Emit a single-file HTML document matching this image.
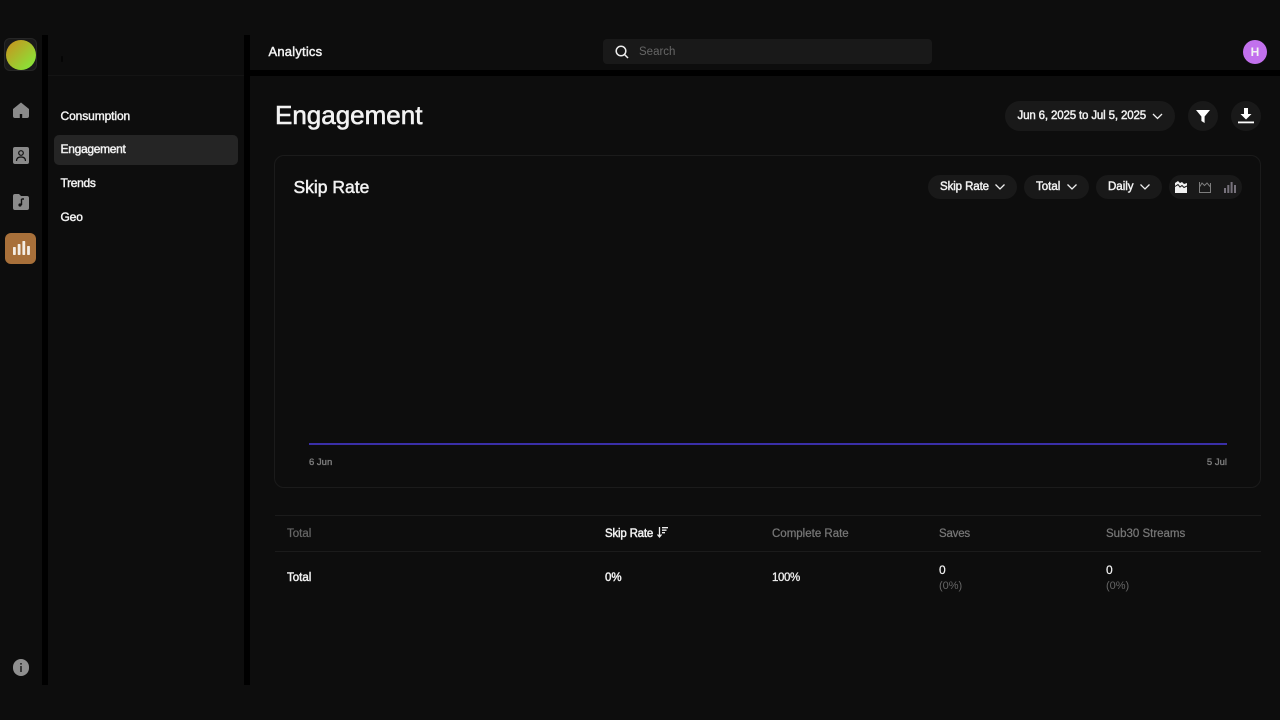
<!DOCTYPE html>
<html lang="en"><head><meta charset="utf-8"><title>Engagement</title>
<style>
*{box-sizing:border-box}
html,body{margin:0;padding:0;background:#0d0d0d}
body{width:1280px;height:720px;position:relative;overflow:hidden;font-family:"Liberation Sans",sans-serif;color:#f2f2f2}
.a{position:absolute}
.t{position:absolute;white-space:nowrap;line-height:16px;font-size:12px;-webkit-text-stroke:.45px currentColor}
.pill{position:absolute;background:#191919;border-radius:16px}
svg{position:absolute;overflow:visible}
.g{color:#7d7d7d;-webkit-text-stroke:.25px currentColor}
</style></head><body>
<div class="a" style="left:42px;top:35px;width:6px;height:650px;background:#000"></div>
<div class="a" style="left:244px;top:35px;width:6px;height:650px;background:#000"></div>
<div class="a" style="left:250px;top:70px;width:1030px;height:6px;background:#000"></div>
<div class="a" style="left:48px;top:75px;width:196px;height:1px;background:#141414"></div>

<div class="a" style="left:4px;top:38px;width:33px;height:33px;border-radius:6px;background:#1a1a1a;border:1px solid #262626"></div>
<div class="a" style="left:6px;top:40px;width:30px;height:30px;border-radius:50%;background:linear-gradient(135deg,#cc8f1c,#7ff03c)"></div>
<div class="a" style="left:61px;top:56px;width:2px;height:6px;border-radius:1px;background:#050505"></div>

<!-- rail icons -->
<svg style="left:12px;top:102px" width="18" height="16" viewBox="0 0 18 16"><path d="M9 .5 17 7v7q0 2-2 2h-4.800v-4h-2.400v4H3q-2 0-2-2V7z" fill="#8a8a8a"/></svg>
<svg style="left:13px;top:147px" width="16" height="17" viewBox="0 0 16 17"><rect width="16" height="17" rx="2" fill="#8a8a8a"/><circle cx="8" cy="6" r="2.300" fill="none" stroke="#111" stroke-width="1.200"/><path d="M3.500 14q0-4 4.500-4t4.500 4" fill="none" stroke="#111" stroke-width="1.200"/></svg>
<svg style="left:13px;top:193px" width="16" height="17" viewBox="0 0 16 17"><path d="M2 1h4l2 2h6q2 0 2 2v10q0 2-2 2H2q-2 0-2-2V3q0-2 2-2z" fill="#8a8a8a"/><path d="M8.500 6v6" stroke="#111" stroke-width="1.400"/><path d="M8.500 6h2.500" stroke="#111" stroke-width="1.500"/><circle cx="7" cy="12" r="1.600" fill="#111"/></svg>
<div class="a" style="left:5px;top:233px;width:31px;height:31px;border-radius:6px;background:#a8703a"></div>
<svg style="left:12.500px;top:241px" width="17" height="14" viewBox="0 0 17 14" fill="#f4ede4"><rect y="6" width="2.800" height="8" rx=".7"/><rect x="4.700" y="3" width="2.800" height="11" rx=".7"/><rect x="9.400" y="0" width="2.800" height="14" rx=".7"/><rect x="14.100" y="5" width="2.800" height="9" rx=".7"/></svg>
<div class="a" style="left:12.500px;top:659px;width:16.500px;height:16.500px;border-radius:50%;background:#8f8f8f"></div>
<svg style="left:19px;top:663px" width="4" height="9" viewBox="0 0 4 9" fill="#222"><rect x="1.200" width="1.600" height="1.600"/><rect x="1.200" y="3" width="1.600" height="6"/></svg>

<!-- secondary nav -->
<div class="a" style="left:54px;top:135px;width:184px;height:30px;border-radius:5px;background:#252525"></div>
<span class="t" style="left:60.500px;top:108px;letter-spacing:-.1px">Consumption</span>
<span class="t" style="left:60.500px;top:141px;letter-spacing:-.3px">Engagement</span>
<span class="t" style="left:60.500px;top:175px;letter-spacing:-.3px">Trends</span>
<span class="t" style="left:60.500px;top:208.500px;letter-spacing:-.15px">Geo</span>

<!-- top bar -->
<span class="t" style="left:268.500px;top:44px;font-size:13px;letter-spacing:.2px">Analytics</span>
<div class="a" style="left:603px;top:39px;width:329px;height:25px;border-radius:4px;background:#191919"></div>
<svg style="left:615px;top:45px" width="14" height="14" viewBox="0 0 14 14" fill="none" stroke="#eee" stroke-width="1.500"><circle cx="6" cy="6" r="4.800"/><path d="M9.500 9.500 13 13"/></svg>
<span class="t g" style="left:639px;top:43.500px;font-size:11.500px;-webkit-text-stroke:0;color:#666">Search</span>
<div class="a" style="left:1243px;top:40px;width:24px;height:24px;border-radius:50%;background:#c271ed"></div>
<span class="t" style="left:1243px;top:44px;width:24px;text-align:center;font-size:12px;font-weight:bold;-webkit-text-stroke:0">H</span>

<!-- header -->
<span class="t" style="left:275px;top:100px;font-size:26px;line-height:30px;-webkit-text-stroke:.6px currentColor">Engagement</span>
<div class="pill" style="left:1005px;top:101px;width:170px;height:30px"></div>
<span class="t" style="left:1017.500px;top:108px;font-size:11.500px;letter-spacing:-.15px">Jun 6, 2025 to Jul 5, 2025</span>
<svg style="left:1152px;top:113px" width="11" height="7" viewBox="0 0 11 7" fill="none" stroke="#eee" stroke-width="1.300"><path d="M1 1l4.500 4.500L10 1"/></svg>
<div class="pill" style="left:1188px;top:101px;width:30px;height:30px;border-radius:50%"></div>
<svg style="left:1196px;top:110px" width="14" height="13" viewBox="0 0 14 13" fill="#fff"><path d="M0 0h14L8.600 6.500V13L5.400 11V6.500z"/></svg>
<div class="pill" style="left:1231px;top:101px;width:30px;height:30px;border-radius:50%"></div>
<svg style="left:1238px;top:108px" width="16" height="16" viewBox="0 0 16 16" fill="#fff"><path d="M6 0h4v6h3.500L8 11.500 2.500 6H6z"/><rect y="13.500" width="16" height="1.800"/></svg>

<!-- card -->
<div class="a" style="left:274px;top:155px;width:987px;height:333px;border:1px solid #1b1b1b;border-radius:10px"></div>
<span class="t" style="left:293.500px;top:175.500px;font-size:17.500px;line-height:22px;-webkit-text-stroke:.5px currentColor">Skip Rate</span>
<div class="pill" style="left:928px;top:175px;width:89px;height:24px"></div>
<span class="t" style="left:940px;top:179px;font-size:11.500px;letter-spacing:-.1px">Skip Rate</span>
<svg style="left:995px;top:184px" width="10" height="6" viewBox="0 0 10 6" fill="none" stroke="#eee" stroke-width="1.300"><path d="M.5.500 5 5 9.500.5"/></svg>
<div class="pill" style="left:1024px;top:175px;width:65px;height:24px"></div>
<span class="t" style="left:1036px;top:179px;font-size:11.500px">Total</span>
<svg style="left:1067px;top:184px" width="10" height="6" viewBox="0 0 10 6" fill="none" stroke="#eee" stroke-width="1.300"><path d="M.5.500 5 5 9.500.5"/></svg>
<div class="pill" style="left:1096px;top:175px;width:66px;height:24px"></div>
<span class="t" style="left:1108px;top:179px;font-size:11.500px">Daily</span>
<svg style="left:1140px;top:184px" width="10" height="6" viewBox="0 0 10 6" fill="none" stroke="#eee" stroke-width="1.300"><path d="M.5.500 5 5 9.500.5"/></svg>
<div class="pill" style="left:1169px;top:175px;width:73px;height:24px"></div>
<svg style="left:1175px;top:181px" width="12" height="12" viewBox="0 0 12 12"><path d="M0 2 3 0l2 2 2-1 2 2 3-1v10H0z" fill="#f2f2f2"/><path d="M0 5.500l3-2 2 2.500 2-1.500 2 2 3-1.500" fill="none" stroke="#191919" stroke-width="1"/></svg>
<svg style="left:1199px;top:181px" width="12" height="12" viewBox="0 0 12 12" fill="none" stroke="#7d7d7d" stroke-width="1"><path d="M.5 1v10.500h11V2"/><path d="M.5 6 3 2l2.500 2.500L8 2l3.500 4"/></svg>
<svg style="left:1224px;top:181px" width="12" height="12" viewBox="0 0 12 12" fill="#77727c"><rect y="7" width="2" height="5"/><rect x="3.300" y="4" width="2" height="8"/><rect x="6.600" y="1" width="2" height="11"/><rect x="10" y="4" width="2" height="8"/></svg>
<div class="a" style="left:309px;top:443px;width:918px;height:2px;background:#3a2fa8"></div>
<span class="t g" style="left:309px;top:455px;font-size:9.500px;line-height:16px;-webkit-text-stroke:.35px currentColor">6 Jun</span>
<span class="t g" style="right:53px;top:455px;font-size:9.500px;-webkit-text-stroke:.35px currentColor">5 Jul</span>

<!-- table -->
<div class="a" style="left:275px;top:515px;width:986px;height:1px;background:#1b1b1b"></div>
<div class="a" style="left:275px;top:551px;width:986px;height:1px;background:#1b1b1b"></div>
<span class="t g" style="left:287px;top:525.500px;font-size:11.500px;color:#666">Total</span>
<span class="t" style="left:605px;top:525.500px;font-size:11.500px;letter-spacing:-.2px">Skip Rate</span>
<svg style="left:657px;top:527px" width="11" height="11" viewBox="0 0 11 11" fill="none" stroke="#eee" stroke-width="1.300"><path d="M2.500 0v9.500M.5 7.500l2 2.500 2-2.500"/><path d="M5 .7h6M5 3.200h4.500M5 5.700h3"/></svg>
<span class="t g" style="left:772px;top:525.500px;font-size:11.500px;color:#777">Complete Rate</span>
<span class="t g" style="left:939px;top:525.500px;font-size:11.500px;color:#777;letter-spacing:-.2px">Saves</span>
<span class="t g" style="left:1106px;top:525.500px;font-size:11.500px;color:#777">Sub30 Streams</span>
<span class="t" style="left:287px;top:570px;font-size:11.500px">Total</span>
<span class="t" style="left:605px;top:570px;font-size:11.500px">0%</span>
<span class="t" style="left:772px;top:570px;font-size:11.500px;letter-spacing:-.4px;-webkit-text-stroke:.3px currentColor">100%</span>
<span class="t" style="left:939px;top:562px;font-size:12px;-webkit-text-stroke:.2px currentColor">0</span>
<span class="t g" style="left:939px;top:578px;font-size:11px;color:#666;-webkit-text-stroke:0">(0%)</span>
<span class="t" style="left:1106px;top:562px;font-size:12px;-webkit-text-stroke:.2px currentColor">0</span>
<span class="t g" style="left:1106px;top:578px;font-size:11px;color:#666;-webkit-text-stroke:0">(0%)</span>
</body></html>
